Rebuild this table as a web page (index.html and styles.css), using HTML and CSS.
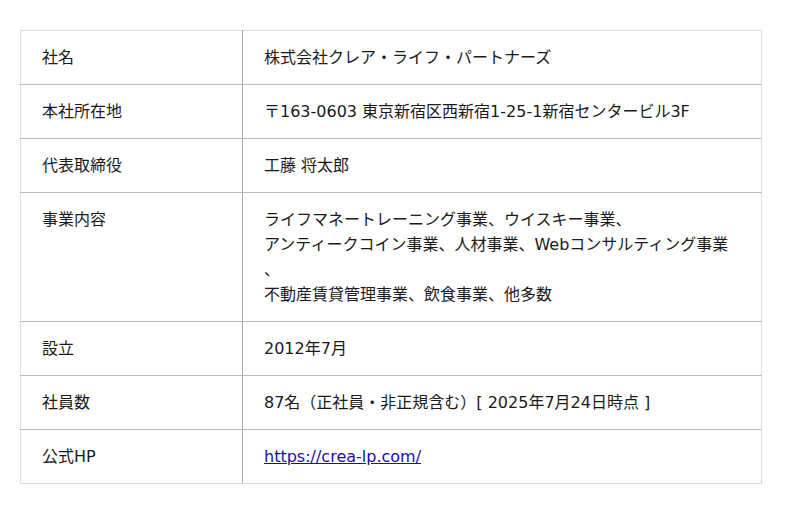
FILE: index.html
```html
<!DOCTYPE html>
<html lang="ja">
<head>
<meta charset="utf-8">
<title>会社概要</title>
<link rel="stylesheet" href="styles.css">
</head>
<body>
<div class="page">
<table class="info">
<tbody>
<tr><th>社名</th><td>株式会社クレア・ライフ・パートナーズ</td></tr>
<tr><th>本社所在地</th><td>〒163-0603 東京新宿区西新宿1-25-1新宿センタービル3F</td></tr>
<tr><th>代表取締役</th><td>工藤 将太郎</td></tr>
<tr><th>事業内容</th><td>ライフマネートレーニング事業、ウイスキー事業、<br>アンティークコイン事業、人材事業、Webコンサルティング事業<br>、<br>不動産賃貸管理事業、飲食事業、他多数</td></tr>
<tr><th>設立</th><td>2012年7月</td></tr>
<tr><th>社員数</th><td>87名（正社員・非正規含む）[ 2025年7月24日時点 ]</td></tr>
<tr><th>公式HP</th><td><a href="https://crea-lp.com/">https://crea-lp.com/</a></td></tr>
</tbody>
</table>
</div>
</body>
</html>
```
FILE: styles.css
```css
html, body {
  margin: 0;
  padding: 0;
  background: #fff;
}
body {
  font-family: "DejaVu Sans", "Noto Sans CJK JP", sans-serif;
  font-size: 16px;
  color: #1a1a1a;
}
.page {
  padding: 30px 20px;
}
.info {
  width: 742px;
  border-collapse: collapse;
  border: 1px solid #ddd;
}
.info th, .info td {
  text-align: left;
  vertical-align: top;
  font-weight: normal;
  line-height: 25px;
  padding: 14px 20px 14px 21px;
  border-top: 1px solid #bbb;
  border-bottom: 1px solid #bbb;
}
.info tr:first-child th, .info tr:first-child td { border-top: 1px solid #ddd; }
.info tr:last-child th, .info tr:last-child td { border-bottom: 1px solid #ddd; }
.info th {
  width: 180px;
  border-right: 1px solid #aaa;
}
.info a {
  color: #1a0dab;
}
```
